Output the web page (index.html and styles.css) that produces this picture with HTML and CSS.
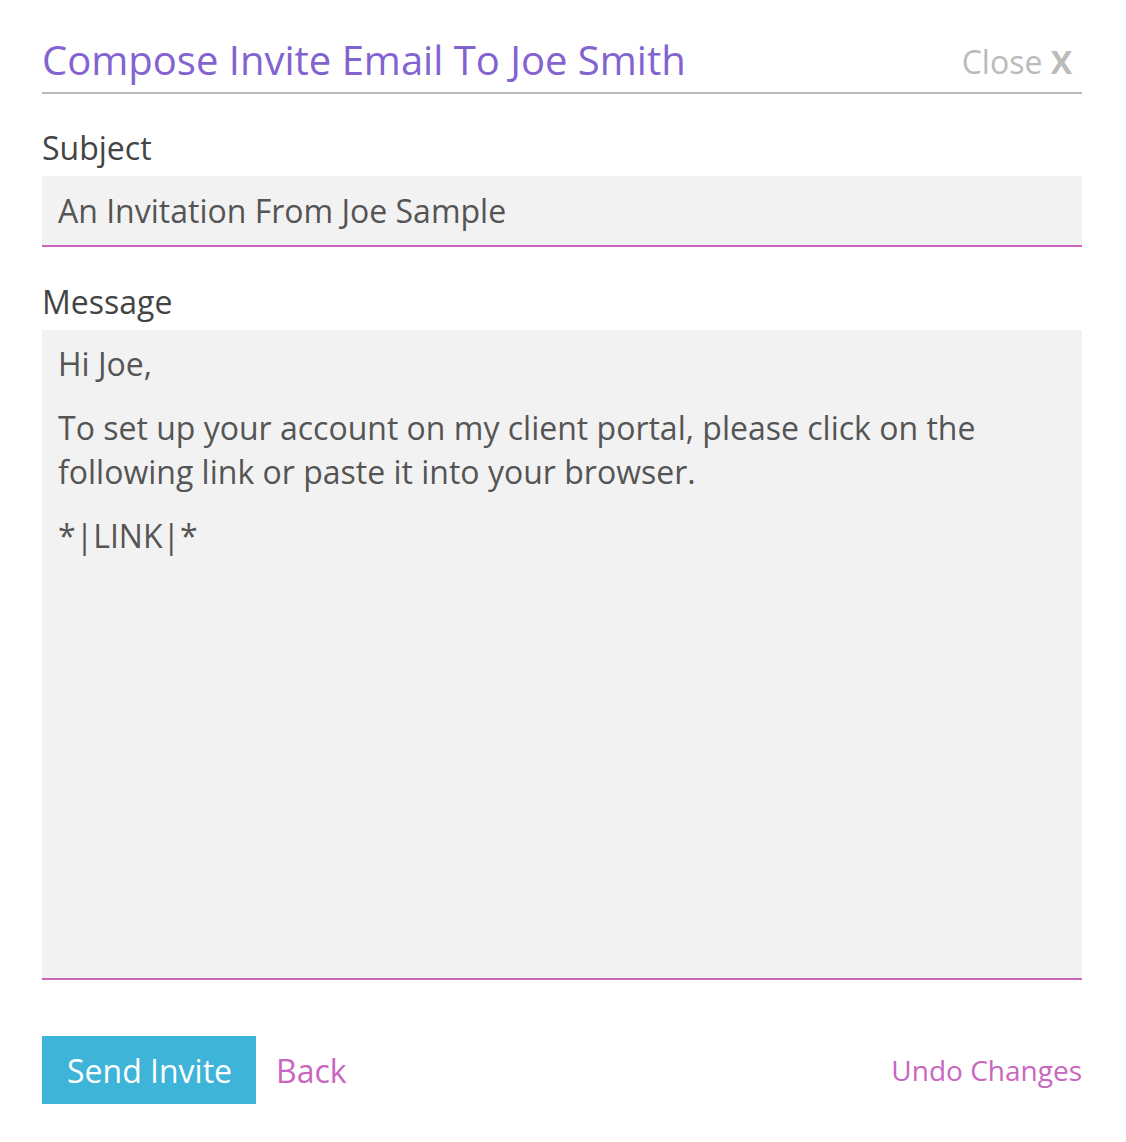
FILE: index.html
```html
<!DOCTYPE html>
<html>
<head>
<meta charset="utf-8">
<link rel="stylesheet" href="styles.css">
</head>
<body>
<div class="modal">
  <div class="header">
    <h1 class="title">Compose Invite Email To Joe Smith</h1>
    <a class="close">Close <b>X</b></a>
  </div>
  <div class="field">
    <label class="label">Subject</label>
    <div class="input">An Invitation From Joe Sample</div>
  </div>
  <div class="field">
    <label class="label">Message</label>
    <div class="textarea">
      <p>Hi Joe,</p>
      <p>To set up your account on my client portal, please click on the following link or paste it into your browser.</p>
      <p>*|LINK|*</p>
    </div>
  </div>
  <div class="actions">
    <button class="send">Send Invite</button>
    <a class="back">Back</a>
    <a class="undo">Undo Changes</a>
  </div>
</div>
</body>
</html>
```
FILE: styles.css
```css
html, body { margin: 0; padding: 0; background: #fff; }
body { font-family: "Open Sans", "Noto Sans", sans-serif; color: #444; }
.modal { width: 1040px; padding: 34px 42px 0 42px; }
.header { display: flex; justify-content: space-between; align-items: flex-end; border-bottom: 2px solid #bbb; padding-bottom: 6px; }
.title { margin: 0; font-weight: 400; font-size: 40px; line-height: 52px; color: #8263cf; }
.close { font-size: 32px; color: #bbb; line-height: 40px; padding-bottom: 4px; margin-right: 10px; }
.close b { font-weight: 700; }
.field { margin-top: 34px; }
.field + .field { margin-top: 35px; }
.label { display: block; font-size: 32px; line-height: 40px; color: #444; margin-bottom: 8px; }
.input { background: #f2f2f2; border-bottom: 2px solid #c966c0; height: 69px; line-height: 69px; padding: 0 16px; font-size: 32px; color: #555; }
.textarea { background: #f2f2f2; border-bottom: 2px solid #c966c0; box-sizing: border-box; height: 650px; padding: 12px 16px; font-size: 32px; color: #555; }
.textarea p { margin: 0 0 20px; line-height: 44px; }
.actions { display: flex; align-items: center; margin-top: 56px; }
.send { background: #3db4d8; color: #fff; border: none; font-family: inherit; font-size: 32px; height: 68px; padding: 0 24px 0 25px; }
.back { margin-left: 20px; color: #c966c0; font-size: 32px; }
.undo { margin-left: auto; color: #c966c0; font-size: 28px; }
```
